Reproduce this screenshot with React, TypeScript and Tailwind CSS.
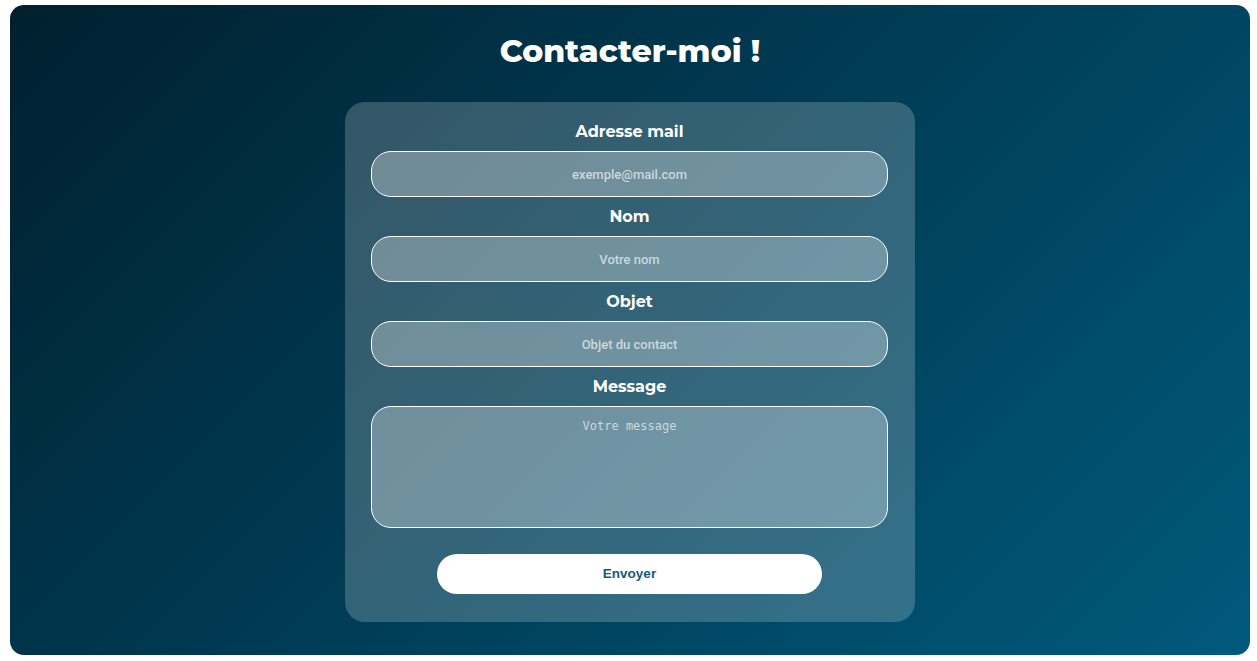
export default function App() {
  return (
    <div className="h-[661px] w-full bg-white pt-[5px] pr-[7px] pl-[10px]">
      <section className="flex h-[650px] flex-col items-center rounded-[14px] bg-[linear-gradient(135deg,#00202e_0%,#003a52_45%,#005a7c_100%)]">
        {/* heading */}
        <h1 className="mt-[26px] text-[31.5px] leading-[40px] font-extrabold text-white [font-family:'Montserrat','Open_Sans',sans-serif]">
          Contacter-moi !
        </h1>
        {/* form card */}
        <form className="mt-[31px] flex w-[570px] flex-col items-center rounded-[20px] bg-white/20 pt-[20px] pr-[27px] pb-[28px] pl-[26px]">
          <Field label="Adresse mail" placeholder="exemple@mail.com" />
          <Field label="Nom" placeholder="Votre nom" />
          <Field label="Objet" placeholder="Objet du contact" />
          <label className="h-[20px] text-[16px] leading-[20px] font-bold text-white [font-family:'Montserrat','Open_Sans',sans-serif]">
            Message
          </label>
          <textarea
            placeholder="Votre message"
            className="mt-[9px] h-[122px] w-full resize-none rounded-[20px] border border-white bg-white/30 px-4 pt-[10px] text-center text-[12px] text-white outline-none placeholder:text-[#cbd8dd] [font-family:'DejaVu_Sans_Mono',monospace]"
          />
          <button
            type="button"
            className="mt-[26px] h-[40px] w-[385px] rounded-full bg-white text-[13.5px] font-bold text-[#145a7c] [font-family:'Liberation_Sans',Arial,sans-serif]"
          >
            Envoyer
          </button>
        </form>
      </section>
    </div>
  );
}

function Field({ label, placeholder }: { label: string; placeholder: string }) {
  return (
    <>
      <label className="h-[20px] text-[16px] leading-[20px] font-bold text-white [font-family:'Montserrat','Open_Sans',sans-serif]">
        {label}
      </label>
      <input
        placeholder={placeholder}
        className="mt-[9px] mb-[10px] h-[46px] w-full rounded-[20px] border border-white bg-white/30 text-center text-[13px] font-medium text-white outline-none placeholder:text-[#cbd8dd] [font-family:Roboto,sans-serif]"
      />
    </>
  );
}
